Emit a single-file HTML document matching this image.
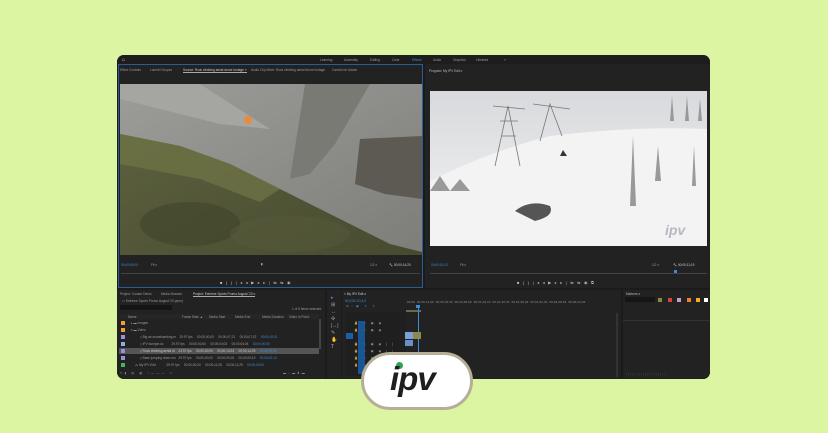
<!DOCTYPE html>
<html><head><style>
*{margin:0;padding:0;box-sizing:border-box}
body{width:828px;height:433px;background:#dcf5a3;position:relative;overflow:hidden;font-family:"Liberation Sans",sans-serif}
.a{position:absolute}
.t{position:absolute;font-size:3.2px;color:#9a9a9a;white-space:nowrap}
.b{color:#3b8bd8}
</style></head><body>
<div class="a" style="left:117px;top:55px;width:593px;height:324px;background:#1b1b1b;border-radius:7px;overflow:hidden">
 <div class="a" style="left:0;top:0;width:593px;height:9px;background:#1d1d1d"></div>
 <div class="t" style="left:5px;top:2px;color:#ddd;font-size:5px">⌂</div>
 <div class="t" style="left:203px;top:3px">Learning</div><div class="t" style="left:227px;top:3px">Assembly</div><div class="t" style="left:253px;top:3px">Editing</div><div class="t" style="left:275px;top:3px">Color</div><div class="t b" style="left:295px;top:3px">Effects</div><div class="t" style="left:316px;top:3px">Audio</div><div class="t" style="left:336px;top:3px">Graphics</div><div class="t" style="left:359px;top:3px">Libraries</div><div class="t" style="left:387px;top:3px">»</div>
 <div class="a" style="left:1px;top:9px;width:305px;height:224px;background:#222;border:1px solid #2a5d96"></div>
 <div class="t" style="left:3px;top:13px">Effect Controls</div><div class="t" style="left:33px;top:13px">Lumetri Scopes</div>
 <div class="t" style="left:66px;top:13px;color:#ccc;border-bottom:1px solid #aaa">Source: Rock climbing aerial drone footage ×</div>
 <div class="t" style="left:134px;top:13px">Audio Clip Mixer: Rock climbing aerial drone footage</div><div class="t" style="left:215px;top:13px">Caretor for Adobe</div>
 <svg class="a" style="left:3px;top:29px" width="302" height="171" viewBox="0 0 302 171">
  <defs><linearGradient id="r" x1="0" y1="0" x2="1" y2="1"><stop offset="0" stop-color="#9c9c99"/><stop offset=".5" stop-color="#8d8d8a"/><stop offset="1" stop-color="#7d7d79"/></linearGradient>
  <linearGradient id="f" x1="0" y1="0" x2="1" y2="1"><stop offset="0" stop-color="#5f6440"/><stop offset="1" stop-color="#474a30"/></linearGradient></defs>
  <rect width="302" height="171" fill="url(#f)"/>
  <polygon points="0,0 302,0 302,168 270,160 220,135 160,105 110,80 60,62 0,50" fill="url(#r)"/>
  <polygon points="185,0 250,0 215,60 190,90 170,95" fill="#7a7a75"/>
  <polygon points="240,55 302,52 302,115 265,110 235,100" fill="#5c5a52"/>
  <polygon points="0,0 80,0 150,45 100,40 0,15" fill="#a5a5a2"/>
  <polygon points="0,50 60,62 110,80 160,105 140,118 80,95 0,80" fill="#6e7245" opacity=".8"/>
  <circle cx="128" cy="36" r="4" fill="#e98a3a"/>
  <ellipse cx="70" cy="140" rx="50" ry="22" fill="#3f4229" opacity=".6"/>
  <ellipse cx="170" cy="150" rx="60" ry="18" fill="#55593a" opacity=".5"/>
 </svg>
 <div class="t b" style="left:4px;top:208px">00;00;00;00</div><div class="t" style="left:34px;top:208px">Fit ▾</div><div class="t" style="left:144px;top:207px;color:#ccc">▮</div><div class="t" style="left:253px;top:208px">1/2 ▾</div><div class="t" style="left:272px;top:208px;color:#ccc">🔧 00;00;14;20</div>
 <div class="a" style="left:4px;top:218px;width:299px;height:1px;background:#444"></div>
 <div class="t" style="left:103px;top:225px;color:#bbb;font-size:4px;letter-spacing:3.5px">■{}|◂◂▶▸▸|⇆⇆◉</div>
 <div class="a" style="left:308px;top:9px;width:285px;height:224px;background:#222"></div>
 <div class="t" style="left:312px;top:14px;color:#bbb">Program: My IPV Edit ≡</div>
 <svg class="a" style="left:313px;top:36px" width="277" height="155" viewBox="0 0 277 155">
  <defs><linearGradient id="s" x1="0" y1="0" x2="0" y2="1"><stop offset="0" stop-color="#d8d9dc"/><stop offset=".5" stop-color="#e6e7e9"/><stop offset="1" stop-color="#f1f1f2"/></linearGradient></defs>
  <rect width="277" height="155" fill="url(#s)"/>
  <path d="M0,90 Q60,60 120,45 Q200,35 277,38 L277,155 L0,155Z" fill="#f3f3f4"/>
  <g stroke="#777" stroke-width=".8" fill="none"><path d="M65,75 L78,15 L90,75 M63,15 L95,18 M70,30 L88,30 M72,45 L86,45"/><path d="M110,50 L120,13 L132,45 M103,13 L140,18"/></g>
  <path d="M130,65 l3,-6 l4,6z" fill="#333"/>
  <g fill="#999"><path d="M200,115 l3,-70 l3,70z"/><path d="M225,90 l3,-35 l3,35z"/><path d="M262,95 l2,-40 l2,40z"/><path d="M240,30 l2,-25 l2,25z M255,30 l2,-25 l2,25z M268,30 l2,-22 l2,22z"/><path d="M0,100 l10,-15 l10,15 l10,-12 l10,12z"/></g>
  <path d="M85,120 q15,-12 35,-5 q5,10 -15,15z" fill="#555"/>
  <text x="235" y="144" font-family="Liberation Sans" font-weight="bold" font-style="italic" font-size="14" fill="#b4b8bf">ipv</text>
 </svg>
 <div class="t b" style="left:314px;top:208px">00;00;10;12</div><div class="t" style="left:343px;top:208px">Fit ▾</div><div class="t" style="left:535px;top:208px">1/2 ▾</div><div class="t" style="left:556px;top:208px;color:#ccc">🔧 00;00;11;19</div>
 <div class="a" style="left:313px;top:218px;width:277px;height:1px;background:#444"></div>
 <div class="a" style="left:557px;top:215px;width:3px;height:3px;background:#3b8bd8"></div>
 <div class="t" style="left:400px;top:225px;color:#bbb;font-size:4px;letter-spacing:3.5px">■{}|◂◂▶▸▸|⇆⇆◉⧉</div>
 <div class="a" style="left:0;top:235px;width:208px;height:89px;background:#222"></div>
 <div class="t" style="left:3px;top:237px">Project: Curator Demo</div><div class="t" style="left:44px;top:237px">Media Browser</div><div class="t" style="left:76px;top:237px;color:#ccc;border-bottom:1px solid #aaa">Project: Extreme Sports Promo August '20 ≡</div>
 <div class="t" style="left:5px;top:244px">▭ Extreme Sports Promo August '20.prproj</div>
 <div class="a" style="left:3px;top:250px;width:52px;height:5px;background:#151515"></div>
 <div class="t" style="left:175px;top:252px">1 of 8 items selected</div>
 <div class="a" style="left:2px;top:259px;width:200px;height:5px;background:#262626"></div>
 <div class="t" style="left:11px;top:260px">Name</div><div class="t" style="left:65px;top:260px">Frame Rate ▲</div><div class="t" style="left:92px;top:260px">Media Start</div><div class="t" style="left:118px;top:260px">Media End</div><div class="t" style="left:145px;top:260px">Media Duration</div><div class="t" style="left:172px;top:260px">Video In Point</div>
 <div class="a" style="left:4px;top:266px;width:4px;height:4px;background:#f0a030"></div><div class="t" style="left:14px;top:266px">▸ ▬ Images</div>
 <div class="a" style="left:4px;top:273px;width:4px;height:4px;background:#f0a030"></div><div class="t" style="left:14px;top:273px">▾ ▬ Video</div>
 <div class="a" style="left:4px;top:280px;width:4px;height:4px;background:#9a8ee0"></div><div class="t" style="left:23px;top:280px">▯ Big air snowboarding.m &nbsp;&nbsp; 29.97 fps &nbsp;&nbsp;&nbsp; 00;00;00;00 &nbsp;&nbsp;&nbsp; 00;00;07;21 &nbsp;&nbsp;&nbsp; 00;00;07;22 &nbsp;&nbsp;&nbsp; <span class="b">00;00;02;01</span></div>
 <div class="a" style="left:4px;top:287px;width:4px;height:4px;background:#8ab0e0"></div><div class="t" style="left:23px;top:287px">▯ IPV bumper.dc &nbsp;&nbsp;&nbsp;&nbsp;&nbsp;&nbsp;&nbsp; 29.97 fps &nbsp;&nbsp;&nbsp; 00;00;00;00 &nbsp;&nbsp;&nbsp; 00;00;04;03 &nbsp;&nbsp;&nbsp; 00;00;04;04 &nbsp;&nbsp;&nbsp; <span class="b">00;00;00;00</span></div>
 <div class="a" style="left:2px;top:293px;width:200px;height:6px;background:#555"></div>
 <div class="a" style="left:4px;top:294px;width:4px;height:4px;background:#9a8ee0"></div><div class="t" style="left:23px;top:294px;color:#ccc">▯ Rock climbing aerial dr &nbsp;&nbsp; 23.97 fps &nbsp;&nbsp;&nbsp; 00;00;00;00 &nbsp;&nbsp;&nbsp; 00;00;14;24 &nbsp;&nbsp;&nbsp; 00;00;14;25 &nbsp;&nbsp;&nbsp; <span class="b">00;00;00;00</span></div>
 <div class="a" style="left:4px;top:301px;width:4px;height:4px;background:#9a8ee0"></div><div class="t" style="left:23px;top:301px">▯ Base jumping down mo &nbsp; 29.97 fps &nbsp;&nbsp;&nbsp; 00;00;00;00 &nbsp;&nbsp;&nbsp; 00;00;09;18 &nbsp;&nbsp;&nbsp; 00;00;09;19 &nbsp;&nbsp;&nbsp; <span class="b">00;00;02;13</span></div>
 <div class="a" style="left:4px;top:308px;width:4px;height:4px;background:#3db85a"></div><div class="t" style="left:18px;top:308px">⁂ My IPV Edit &nbsp;&nbsp;&nbsp;&nbsp;&nbsp;&nbsp;&nbsp;&nbsp;&nbsp;&nbsp; 29.97 fps &nbsp;&nbsp;&nbsp; 00;00;00;00 &nbsp;&nbsp;&nbsp; 00;00;11;28 &nbsp;&nbsp;&nbsp; 00;00;11;29 &nbsp;&nbsp;&nbsp; <span class="b">00;00;00;00</span></div>
 <div class="a" style="left:202px;top:264px;width:2px;height:30px;background:#444"></div>
 <div class="t" style="left:3px;top:316px;color:#888;letter-spacing:2px">✎▮ ▤ ▦ ○——— ▭</div><div class="t" style="left:166px;top:316px;color:#888;letter-spacing:2px">▬⌕▬▮▬</div>
 <div class="a" style="left:210px;top:235px;width:14px;height:89px;background:#222"></div>
 <div class="t" style="left:214px;top:240px;color:#3b8bd8;font-size:5px;line-height:7px">▸<br><span style="color:#aaa">⊞<br>↔<br>✣<br>|↔|<br>✎<br>✋<br>T</span></div>
 <div class="a" style="left:225px;top:235px;width:279px;height:89px;background:#222"></div>
 <div class="t" style="left:227px;top:237px;color:#ccc">× My IPV Edit ≡</div>
 <div class="t b" style="left:228px;top:243px;font-size:4px">00;00;10;12</div>
 <div class="t b" style="left:229px;top:249px;letter-spacing:2.5px">⊕∩▣ ▾ ✎</div>
 <div class="t" style="left:289px;top:245px;font-size:2.8px;letter-spacing:.2px">;00;00 &nbsp;00;00;14;00 &nbsp;00;00;32;00 &nbsp;00;00;48;00 &nbsp;00;01;04;02 &nbsp;00;01;20;02 &nbsp;00;01;36;02 &nbsp;00;01;52;02 &nbsp;00;02;08;04 &nbsp;00;02;24;04</div>
 <div class="a" style="left:289px;top:255px;width:15px;height:2px;background:#6a6a4a"></div>
 <div class="a" style="left:301px;top:251px;width:1px;height:73px;background:#3b8bd8"></div>
 <div class="a" style="left:299px;top:250px;width:4px;height:3px;background:#3b8bd8"></div>
 <div class="a" style="left:229px;top:257px;width:60px;height:64px;background:#1f1f1f"></div>
 <div class="t" style="left:237px;top:265px;line-height:7px;letter-spacing:2px">🔒 ▭ ▣ ◉<br>🔒 ▭ ▣ ◉<br>&nbsp;<br>🔒 ▭ ▣ ◉ | |<br>🔒 ▭ ▣ ◉ | |<br>🔒 ▭ ▣ ◉<br>🔒 ▭ ▣</div>
 <div class="a" style="left:229px;top:278px;width:7px;height:6px;background:#1a5fa8"></div>
 <div class="a" style="left:241px;top:266px;width:7px;height:53px;background:#1a5fa8;opacity:.85"></div>
 <div class="a" style="left:288px;top:277px;width:16px;height:7px;background:#7aa0d8"></div>
 <div class="a" style="left:296px;top:277px;width:8px;height:7px;background:#8a8a50"></div>
 <div class="a" style="left:288px;top:285px;width:8px;height:6px;background:#6b8fc8"></div>
 <div class="a" style="left:499px;top:258px;width:2px;height:64px;background:#333"></div>
 <div class="a" style="left:506px;top:235px;width:87px;height:89px;background:#222"></div>
 <div class="t" style="left:509px;top:237px;color:#bbb">Markers ≡</div>
 <div class="a" style="left:508px;top:242px;width:30px;height:5px;background:#161616"></div>
 <div class="a" style="left:541px;top:243px;width:4px;height:4px;background:#8a8a40"></div>
 <div class="a" style="left:551px;top:243px;width:4px;height:4px;background:#d84040"></div>
 <div class="a" style="left:560px;top:243px;width:4px;height:4px;background:#c0a0c8"></div>
 <div class="a" style="left:570px;top:243px;width:4px;height:4px;background:#f08020"></div>
 <div class="a" style="left:579px;top:243px;width:4px;height:4px;background:#f0b020"></div>
 <div class="a" style="left:587px;top:243px;width:4px;height:4px;background:#fff"></div>
 <div class="a" style="left:506px;top:265px;width:87px;height:1px;background:#333"></div>
 <div class="t" style="left:509px;top:318px;font-size:2.5px;color:#666;letter-spacing:1.5px">|||||||||||||||||||</div>
</div>
<div class="a" style="left:361px;top:352px;width:112px;height:58px;border-radius:29px;background:#fff;border:3px solid #b7ae98"></div>
<div class="a" style="left:396px;top:362px;width:7px;height:7px;border-radius:50%;background:#2ea44f"></div>
<div class="a" style="left:390px;top:360px;font:italic bold 33px 'Liberation Sans',sans-serif;color:#1f1f1f;letter-spacing:-1px">ipv</div>
</body></html>
